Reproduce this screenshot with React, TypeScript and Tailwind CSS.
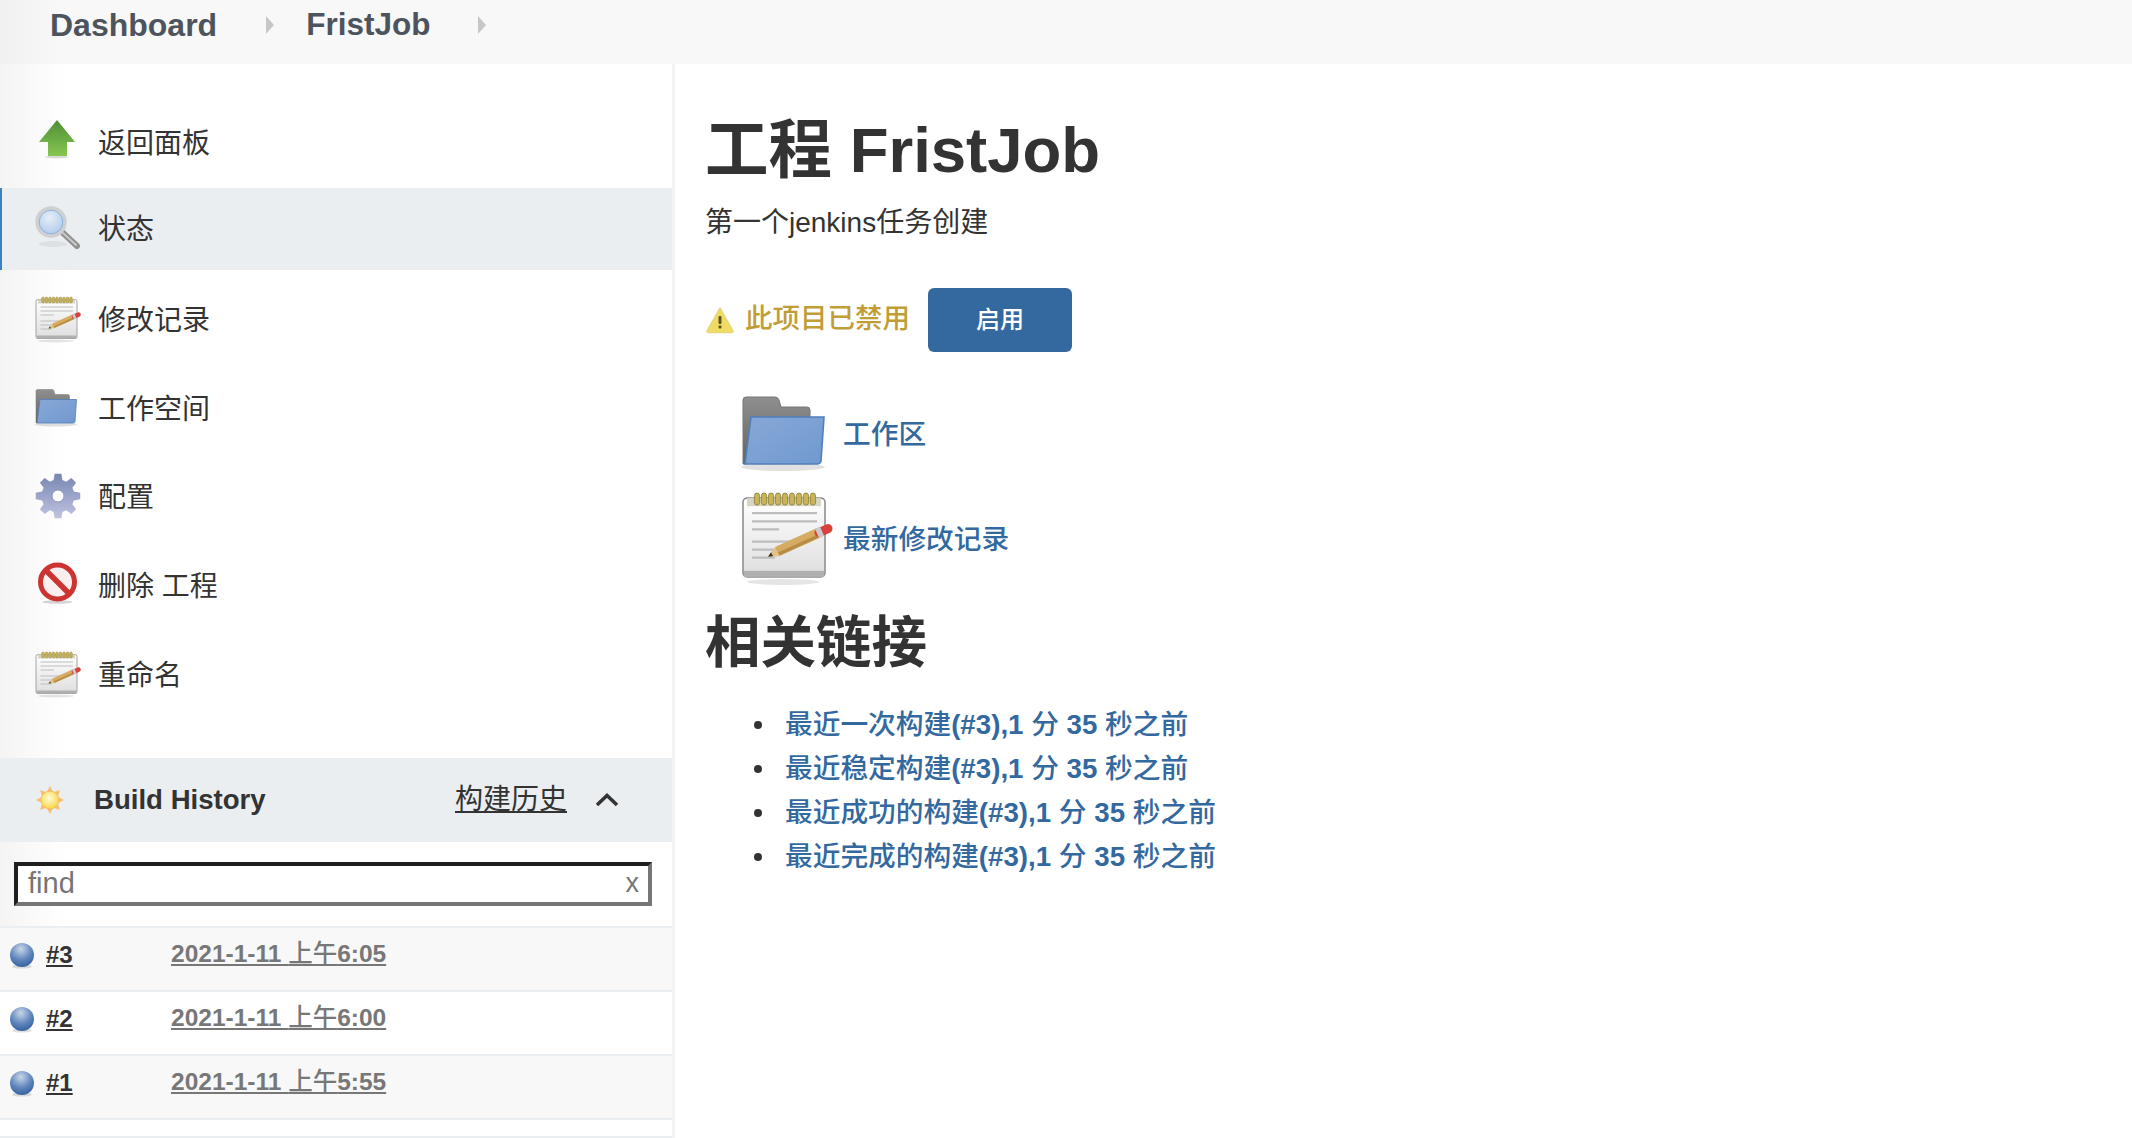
// Jenkins job page: breadcrumb bar, side task list with build history, job detail.

const CJK = "font-['Liberation_Sans','Noto_Sans_CJK_SC',sans-serif]";

// Latin runs are bold and CJK runs medium, as in the original's font pairing.
function Mixed({ text }: { text: string }) {
  return (
    <>
      {text.split(/([\x00-\x7f]+)/).map((part, i) =>
        i % 2 ? <b key={i}>{part}</b> : <span key={i}>{part}</span>
      )}
    </>
  );
}

function UpArrow() {
  return (
    <svg viewBox="0 0 48 48" className="h-[48px] w-[48px] blur-[0.5px]">
      <defs>
        <linearGradient id="upg" x1="0" y1="0" x2="0" y2="1">
          <stop offset="0" stopColor="#4f8f33" />
          <stop offset="1" stopColor="#86c653" />
        </linearGradient>
      </defs>
      <ellipse cx="23" cy="38" rx="12" ry="1.500" fill="#000" opacity="0.14" />
      <path d="M23 1 41 23H33V37H14V23H5Z" fill="url(#upg)" />
    </svg>
  );
}

function Magnifier() {
  return (
    <svg viewBox="0 0 48 48" className="h-[48px] w-[48px] blur-[0.5px]">
      <defs>
        <radialGradient id="mag" cx="0.45" cy="0.35" r="0.7">
          <stop offset="0" stopColor="#e6eef8" />
          <stop offset="1" stopColor="#a9c5e8" />
        </radialGradient>
      </defs>
      <ellipse cx="19" cy="39" rx="14" ry="3" fill="#000" opacity="0.06" />
      <path d="M28 27 43 41" stroke="#8f918f" strokeWidth="6" strokeLinecap="round" />
      <path d="M29 28 42 40" stroke="#c9cac8" strokeWidth="2" strokeLinecap="round" />
      <circle cx="17" cy="17" r="14" fill="url(#mag)" stroke="#cfd0cf" strokeWidth="3.500" />
      <circle cx="17" cy="17" r="11.800" fill="none" stroke="#8fb2de" strokeWidth="1" />
    </svg>
  );
}

function Notepad({ size }: { size: string }) {
  const rings = [9, 12.500, 16, 19.500, 23, 26.500, 30, 33.500, 37];
  return (
    <svg viewBox="0 0 48 48" preserveAspectRatio="none" className={`${size} blur-[0.5px]`}>
      <defs>
        <linearGradient id="padg" x1="0" y1="0" x2="0" y2="1">
          <stop offset="0" stopColor="#ffffff" />
          <stop offset="1" stopColor="#dedede" />
        </linearGradient>
      </defs>
      <ellipse cx="22" cy="45" rx="18" ry="1.500" fill="#000" opacity="0.1" />
      <rect x="2" y="3.500" width="41" height="39" rx="2" fill="url(#padg)" stroke="#8f8f8f" strokeWidth="0.800" />
      <rect x="2.500" y="39.500" width="40" height="3" fill="#b0b0b0" />
      <rect x="4" y="3.500" width="37" height="4" fill="#d8d5c6" />
      {rings.map((x) => (
        <rect key={x} x={x - 1.300} y="1" width="2.600" height="6" rx="1.300" fill="#c9b458" stroke="#8b7e3a" strokeWidth="0.400" />
      ))}
      <path d="M6.500 11H39M6.500 15H39M6.500 19H20M6.500 25H30M6.500 29H22M6.500 33H18" stroke="#bdbdbd" strokeWidth="1.100" />
      <path d="M19 30 40 20.600" stroke="#d6ab62" strokeWidth="5" />
      <path d="M19.500 31.300 40 22.100" stroke="#b98c45" strokeWidth="1.600" />
      <path d="M14.500 32.500 17.800 27.800 20.500 32.300Z" fill="#e2c28a" />
      <path d="M14.500 32.500 16 30.300 17 32.300Z" fill="#43351c" />
      <path d="M40 20.600 44.500 18.600" stroke="#d9423c" strokeWidth="4.500" strokeLinecap="round" />
      <path d="M39 21 41.500 19.900" stroke="#c9c9c9" strokeWidth="5" />
    </svg>
  );
}

function Folder({ size }: { size: string }) {
  return (
    <svg viewBox="0 0 48 48" preserveAspectRatio="none" className={`${size} blur-[0.5px]`}>
      <defs>
        <linearGradient id="fldb" x1="0" y1="0" x2="0" y2="1">
          <stop offset="0" stopColor="#8f8f8f" />
          <stop offset="1" stopColor="#626262" />
        </linearGradient>
        <linearGradient id="fldf" x1="0" y1="0" x2="1" y2="1">
          <stop offset="0" stopColor="#86a8d6" />
          <stop offset="1" stopColor="#7199d0" />
        </linearGradient>
      </defs>
      <ellipse cx="22" cy="39.500" rx="21" ry="2" fill="#000" opacity="0.12" />
      <path d="M2 6Q2 4.500 3.500 4.500H18Q19.500 4.500 20 6L21 9.500H34Q35.500 9.500 35.500 11V15H7L4 38H2Z" fill="url(#fldb)" stroke="#777" strokeWidth="0.500" />
      <path d="M6 14.500H42.500L41 36.500Q40.800 38 39 38H3Z" fill="url(#fldf)" stroke="#4f7fbc" strokeWidth="0.800" />
    </svg>
  );
}

// Single outline so the vertical gradient runs across the whole wheel.
function gearPath() {
  const cx = 24;
  const cy = 23;
  const pts: string[] = [];
  for (let i = 0; i < 8; i++) {
    const a = (i * Math.PI) / 4 - Math.PI / 2;
    const at = (r: number, d: number) =>
      `${(cx + r * Math.cos(a + d)).toFixed(2)} ${(cy + r * Math.sin(a + d)).toFixed(2)}`;
    pts.push(at(16.500, -0.270), at(22.500, -0.150), at(22.500, 0.150), at(16.500, 0.270));
  }
  return `M${pts.join("L")}Z`;
}

function Gear() {
  return (
    <svg viewBox="0 0 48 48" className="h-[48px] w-[48px] blur-[0.5px]">
      <defs>
        <linearGradient id="gearg" x1="0" y1="0" x2="0" y2="1">
          <stop offset="0" stopColor="#7686b3" />
          <stop offset="1" stopColor="#c0c3e0" />
        </linearGradient>
      </defs>
      <path d={gearPath()} fill="url(#gearg)" />
      <circle cx="24" cy="23" r="6" fill="#fff" stroke="#8d96c0" strokeWidth="1" />
    </svg>
  );
}

function NoEntry() {
  return (
    <svg viewBox="0 0 48 48" className="h-[48px] w-[48px] blur-[0.5px]">
      <ellipse cx="23.500" cy="40" rx="15" ry="1.800" fill="#000" opacity="0.16" />
      <circle cx="23.500" cy="20" r="17" fill="#fbeeee" stroke="#cc3432" strokeWidth="5" />
      <path d="M11.500 8 35.500 32" stroke="#cc3432" strokeWidth="5.500" />
    </svg>
  );
}

function Sun() {
  const rays = [0, 45, 90, 135, 180, 225, 270, 315];
  return (
    <svg viewBox="0 0 32 32" className="h-[32px] w-[32px] blur-[0.5px]">
      <defs>
        <radialGradient id="sun" cx="0.45" cy="0.4" r="0.6">
          <stop offset="0" stopColor="#fffcd8" />
          <stop offset="1" stopColor="#f9d645" />
        </radialGradient>
      </defs>
      {rays.map((a) => (
        <path key={a} d="M16 2 19 8H13Z" fill="#f7bd6a" transform={`rotate(${a} 16 16)`} />
      ))}
      <circle cx="16" cy="16" r="9" fill="url(#sun)" stroke="#f5bd62" strokeWidth="1" />
    </svg>
  );
}

function Ball() {
  return (
    <svg viewBox="0 0 28 28" className="h-[28px] w-[28px] shrink-0 blur-[0.4px]">
      <defs>
        <radialGradient id="ball" cx="0.45" cy="0.25" r="0.8">
          <stop offset="0" stopColor="#c7d6ea" />
          <stop offset="0.55" stopColor="#6288bd" />
          <stop offset="1" stopColor="#2f5c9c" />
        </radialGradient>
      </defs>
      <ellipse cx="14" cy="25.500" rx="10" ry="2" fill="#000" opacity="0.12" />
      <circle cx="14" cy="14" r="12" fill="url(#ball)" />
    </svg>
  );
}

function WarnIcon() {
  return (
    <svg viewBox="0 0 30 28" className="h-[28px] w-[30px] blur-[0.4px]">
      <path d="M15 2 28 25Q28 26.500 26.500 26.500H3.500Q2 26.500 2 25Z" fill="#f1dc63" stroke="#e6d679" strokeWidth="1.500" strokeLinejoin="round" />
      <rect x="13.500" y="10" width="3" height="8" rx="1" fill="#5d5528" />
      <rect x="13.500" y="19.500" width="3" height="3" rx="1" fill="#5d5528" />
    </svg>
  );
}

function Caret() {
  return (
    <svg viewBox="0 0 8 18" className="h-[18px] w-[8px]">
      <path d="M0 0 8 9 0 18Z" fill="#c5c7c9" />
    </svg>
  );
}

const tasks = [
  { label: "返回面板", icon: <UpArrow /> },
  { label: "状态", icon: <Magnifier />, active: true },
  { label: "修改记录", icon: <Notepad size="h-[48px] w-[48px]" /> },
  { label: "工作空间", icon: <Folder size="h-[48px] w-[48px]" /> },
  { label: "配置", icon: <Gear /> },
  { label: "删除 工程", icon: <NoEntry /> },
  { label: "重命名", icon: <Notepad size="h-[48px] w-[48px]" /> },
];

const builds = [
  { id: "#3", time: "2021-1-11 上午6:05", striped: true },
  { id: "#2", time: "2021-1-11 上午6:00", striped: false },
  { id: "#1", time: "2021-1-11 上午5:55", striped: true },
];

const permalinks = [
  "最近一次构建(#3),1 分 35 秒之前",
  "最近稳定构建(#3),1 分 35 秒之前",
  "最近成功的构建(#3),1 分 35 秒之前",
  "最近完成的构建(#3),1 分 35 秒之前",
];

export default function App() {
  return (
    <div className={`h-[1138px] w-[2132px] overflow-hidden bg-white ${CJK}`}>
      <header className="flex h-[64px] items-center bg-gradient-to-r from-[#f1f1f1] to-[#f8f8f8] to-[3%] pb-[15px] pl-[50px] text-[32px] font-bold text-[#4d545d]">
        <span>Dashboard</span>
        <span className="ml-[49px] mr-[32px]"><Caret /></span>
        <span className="text-[31.500px]">FristJob</span>
        <span className="ml-[48px]"><Caret /></span>
      </header>

      <div className="flex">
        <aside className="h-[1074px] w-[675px] shrink-0 border-r-[3px] border-[#f3f3f3] bg-gradient-to-r from-[#f4f4f4] to-white to-[10%]">
          <nav className="flex flex-col gap-[6.7px] pt-[38px]">
            {tasks.map((t) => (
              <div
                key={t.label}
                className={`flex h-[82px] items-center text-[28px] text-[#333] ${
                  t.active ? "-mt-[3px] mb-[2.500px] border-l-[2px] border-[#3b82c4] bg-[#eaeef1] pl-[32px]" : "pl-[34px]"
                }`}
              >
                {t.icon}
                <span className="ml-[16px] mt-[2px]">{t.label}</span>
              </div>
            ))}
          </nav>

          <div className="mt-[42px] flex h-[84px] items-center bg-[#eaeef1] pl-[34px] pr-[53px] text-[#333]">
            <Sun />
            <span className="ml-[28px] text-[27.600px] font-bold">Build History</span>
            <span className="ml-auto text-[28px] underline">构建历史</span>
            <svg viewBox="0 0 24 14" className="ml-[28px] h-[14px] w-[24px]">
              <path d="M2 12 12 2.500 22 12" fill="none" stroke="#333" strokeWidth="3.500" />
            </svg>
          </div>

          <div className="px-[14px] py-[20px]">
            <div className="flex h-[44px] w-[638px] items-center justify-between border-[4px] border-b-[#767676] border-l-[#1f1f1f] border-r-[#767676] border-t-[#1f1f1f] bg-white pl-[10px] pr-[9px] text-[29px] text-[#757575]">
              <span>find</span>
              <span className="text-[27px]">x</span>
            </div>
          </div>

          <ul>
            {builds.map((b) => (
              <li
                key={b.id}
                className={`flex h-[64px] items-center border-t-[2px] border-[#eaeef1] pb-[8px] pl-[8px] ${b.striped ? "bg-[#f8f8f8]" : "bg-white"}`}
              >
                <Ball />
                <span className="ml-[10px] w-[125px] text-[24px] font-bold text-[#333] underline">{b.id}</span>
                <span className="text-[24.500px] font-medium text-[#777] underline"><Mixed text={b.time} /></span>
              </li>
            ))}
            <li className="h-[20px] border-y-[2px] border-[#eaeef1] bg-white" />
          </ul>
        </aside>

        <main className="flex-1 pl-[30px] pt-[51px] text-[#333]">
          <h1 className="text-[63.500px] font-bold leading-[70px]">工程 FristJob</h1>
          <p className="mt-[18px] text-[28px] leading-[40px]">第一个jenkins任务创建</p>

          <div className="mt-[45px] flex items-center">
            <WarnIcon />
            <span className="ml-[10px] -mt-[3px] text-[27.500px] font-medium text-[#c09d35]">此项目已禁用</span>
            <button className="ml-[18px] h-[64px] w-[144px] rounded-[6px] bg-[#33699f] text-[24px] font-medium text-white">启用</button>
          </div>

          <div className="mt-[36px] flex h-[96px] items-center pl-[34px] text-[27.700px] font-medium text-[#33699f]">
            <Folder size="h-[96px] w-[96px]" />
            <span className="ml-[8px] -mt-[2px]">工作区</span>
          </div>
          <div className="mt-[7px] flex h-[97px] items-center pl-[34px] text-[27.700px] font-medium text-[#33699f]">
            <Notepad size="h-[97px] w-[96px]" />
            <span className="ml-[8px]">最新修改记录</span>
          </div>

          <h2 className="mt-[20px] text-[55.500px] font-bold leading-[70px]">相关链接</h2>
          <ul className="mt-[25px] pl-[49px] text-[27.700px] font-medium leading-[44px] text-[#33699f]">
            {permalinks.map((p) => (
              <li key={p} className="flex items-center gap-[23px]">
                <span className="h-[8px] w-[8px] rounded-full bg-[#333]" />
                <span><Mixed text={p} /></span>
              </li>
            ))}
          </ul>
        </main>
      </div>
    </div>
  );
}
